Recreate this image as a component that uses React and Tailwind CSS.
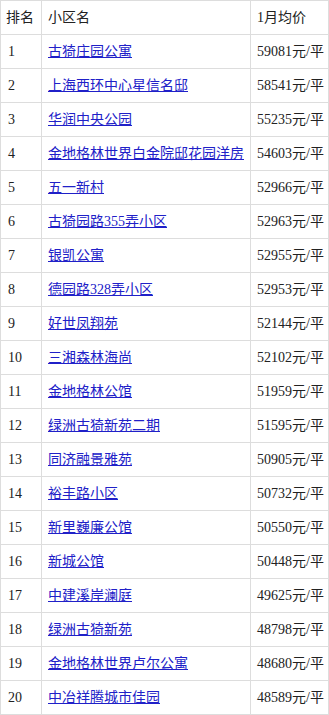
import React from 'react';

const rows = [
  ['古猗庄园公寓', '59081'],
  ['上海西环中心星信名邸', '58541'],
  ['华润中央公园', '55235'],
  ['金地格林世界白金院邸花园洋房', '54603'],
  ['五一新村', '52966'],
  ['古猗园路355弄小区', '52963'],
  ['银凯公寓', '52955'],
  ['德园路328弄小区', '52953'],
  ['好世凤翔苑', '52144'],
  ['三湘森林海尚', '52102'],
  ['金地格林公馆', '51959'],
  ['绿洲古猗新苑二期', '51595'],
  ['同济融景雅苑', '50905'],
  ['裕丰路小区', '50732'],
  ['新里巍廉公馆', '50550'],
  ['新城公馆', '50448'],
  ['中建溪岸澜庭', '49625'],
  ['绿洲古猗新苑', '48798'],
  ['金地格林世界卢尔公寓', '48680'],
  ['中冶祥腾城市佳园', '48589'],
];

const App = () => {
  return (
    <div className="w-[329px] bg-white" style={{ fontFamily: '"Liberation Serif", "Noto Sans CJK SC", serif' }}>
      <table className="w-[328px] border-collapse table-fixed text-[14px] text-[#222]">
        <colgroup>
          <col className="w-[41px]" />
          <col className="w-[209px]" />
          <col className="w-[78px]" />
        </colgroup>
        <thead>
          <tr className="h-[34px]">
            <th className="border border-[#ddd] px-[5px] py-0 text-left font-normal text-[14px] whitespace-nowrap">排名</th>
            <th className="border border-[#ddd] px-[6px] py-0 text-left font-normal text-[14px] whitespace-nowrap">小区名</th>
            <th className="border border-[#ddd] px-[6px] py-0 text-left font-normal text-[14px] whitespace-nowrap">1月均价</th>
          </tr>
        </thead>
        <tbody>
          {rows.map(([name, price], i) => (
            <tr key={i} className="h-[34px]">
              <td className="border border-[#ddd] px-[7px] py-0">{i + 1}</td>
              <td className="border border-[#ddd] px-[6px] py-0 whitespace-nowrap">
                <a href="#" className="text-[#2020c8] underline">{name}</a>
              </td>
              <td className="border border-[#ddd] px-[6px] py-0 whitespace-nowrap">{price}元/平</td>
            </tr>
          ))}
        </tbody>
      </table>
    </div>
  );
};

export default App;
